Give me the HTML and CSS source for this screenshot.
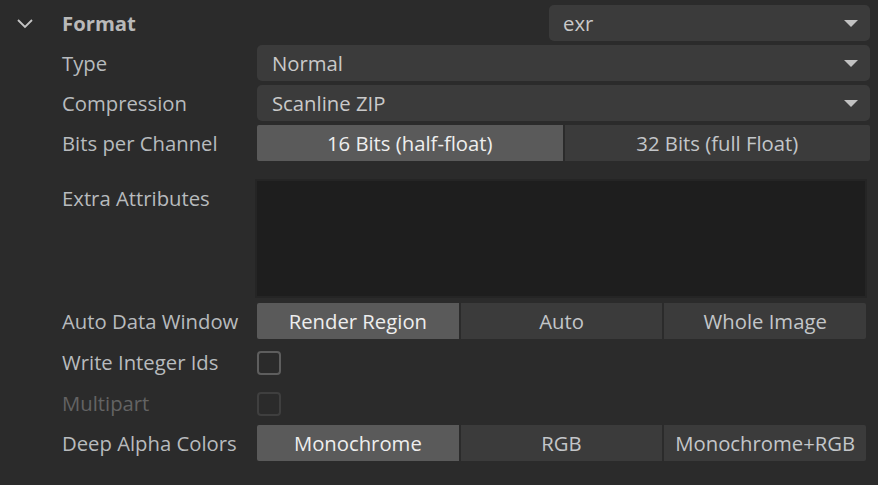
FILE: index.html
```html
<!DOCTYPE html>
<html>
<head>
<meta charset="utf-8">
<link rel="stylesheet" href="styles.css">
</head>
<body>
<div class="panel">
  <div class="row">
    <div class="lead">
      <svg width="18" height="12" viewBox="0 0 18 12"><polyline points="2,3 9,10 16,3" fill="none" stroke="#c4c4c4" stroke-width="1.8"/></svg>
    </div>
    <div class="label head">Format</div>
    <div class="field head-field">
      <div class="dropdown short"><span>exr</span><i class="tri"></i></div>
    </div>
  </div>

  <div class="row">
    <div class="lead"></div>
    <div class="label">Type</div>
    <div class="field dropdown"><span>Normal</span><i class="tri"></i></div>
  </div>

  <div class="row">
    <div class="lead"></div>
    <div class="label">Compression</div>
    <div class="field dropdown"><span>Scanline ZIP</span><i class="tri"></i></div>
  </div>

  <div class="row">
    <div class="lead"></div>
    <div class="label">Bits per Channel</div>
    <div class="field seg">
      <div class="opt on">16 Bits (half-float)</div>
      <div class="opt">32 Bits (full Float)</div>
    </div>
  </div>

  <div class="row tall">
    <div class="lead"></div>
    <div class="label top">Extra Attributes</div>
    <div class="textarea"></div>
  </div>

  <div class="row">
    <div class="lead"></div>
    <div class="label">Auto Data Window</div>
    <div class="field seg seg3">
      <div class="opt on">Render Region</div>
      <div class="opt">Auto</div>
      <div class="opt">Whole Image</div>
    </div>
  </div>

  <div class="row chk-row">
    <div class="lead"></div>
    <div class="label">Write Integer Ids</div>
    <div class="chk-cell"><div class="check"></div></div>
  </div>

  <div class="row chk-row">
    <div class="lead"></div>
    <div class="label disabled">Multipart</div>
    <div class="chk-cell"><div class="check off"></div></div>
  </div>

  <div class="row">
    <div class="lead"></div>
    <div class="label">Deep Alpha Colors</div>
    <div class="field seg seg3">
      <div class="opt on">Monochrome</div>
      <div class="opt">RGB</div>
      <div class="opt">Monochrome+RGB</div>
    </div>
  </div>
</div>
</body>
</html>
```
FILE: styles.css
```css
html, body {
  margin: 0;
  padding: 0;
  background: #2b2b2b;
}
body {
  font-family: "Open Sans", "Noto Sans", sans-serif;
  font-size: 20.3px;
  color: #b9b9b9;
  width: 878px;
  height: 485px;
  overflow: hidden;
}
.panel {
  display: flex;
  flex-direction: column;
  gap: 4px;
  padding-top: 5px;
}
.row {
  display: flex;
  height: 36px;
}
.row.tall {
  height: 119px;
  margin-top: 14px;
  margin-bottom: 1px;
}
.row.chk-row {
  height: 37px;
}
.lead {
  width: 62px;
  flex: none;
  display: flex;
  align-items: center;
  padding-left: 16px;
  box-sizing: border-box;
}
.label {
  width: 195px;
  flex: none;
  display: flex;
  align-items: center;
  white-space: nowrap;
  color: #b8bbbe;
}
.label.head {
  font-weight: 700;
  color: #b9b9b9;
}
.label.top {
  align-items: flex-start;
  padding-top: 5px;
  box-sizing: border-box;
}
.label.disabled {
  color: #636363;
}
.field {
  width: 613px;
  flex: none;
  box-sizing: border-box;
}
.head-field {
  display: flex;
  justify-content: flex-end;
}
.dropdown {
  display: flex;
  align-items: center;
  justify-content: space-between;
  background: #3b3b3b;
  border-radius: 5px;
  padding: 0 12px 0 15px;
  color: #c9c9c9;
}
.dropdown.short {
  width: 321px;
  box-sizing: border-box;
  padding-left: 14px;
}
.tri {
  width: 0;
  height: 0;
  border-left: 7px solid transparent;
  border-right: 7px solid transparent;
  border-top: 7px solid #c2c2c2;
}
.seg {
  display: flex;
  gap: 2px;
  border-radius: 2px;
  overflow: hidden;
}
.seg.seg3 {
  width: 609px;
}
.opt {
  flex: 1;
  display: flex;
  align-items: center;
  justify-content: center;
  background: #3b3b3b;
  color: #c3c6c9;
  white-space: nowrap;
}
.opt.on {
  background: #5a5a5a;
  color: #eeeeee;
}
.textarea {
  margin-left: -2px;
  width: 612px;
  height: 119px;
  box-sizing: border-box;
  background: #1e1e1e;
  border: 2px solid #252525;
}
.chk-cell {
  display: flex;
  align-items: flex-start;
  padding-top: 8px;
}
.check {
  width: 20px;
  height: 20px;
  border: 2px solid #5e5e5e;
  border-radius: 4px;
}
.check.off {
  border-color: #3f3f3f;
}
```
